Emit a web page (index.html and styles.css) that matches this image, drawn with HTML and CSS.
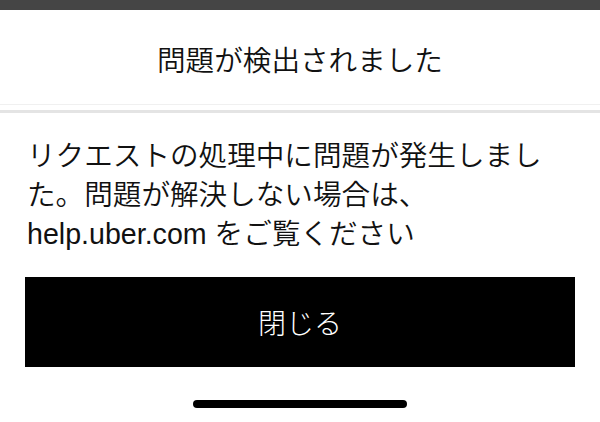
FILE: index.html
```html
<!DOCTYPE html>
<html lang="ja">
    <head>
        <title>問題が検出されました</title>
        <meta charset="UTF-8"/>
        <meta name="viewport" content="width=device-width" />
        <link rel="stylesheet" href="styles.css">
    </head>
    <body>
        <div id="page">
            <div class="barra"></div>
            <div class="cabecalho">
                <h1 class="titulo">問題が検出されました</h1>
            </div>
            <div class="separador"></div>
            <div id="conteudo">
                <p class="mensagem">リクエストの処理中に問題が発生しました。問題が解決しない場合は、help.uber.com をご覧ください</p>
                <button class="botao" type="button">閉じる</button>
            </div>
            <div class="rodape">
                <div class="indicador"></div>
            </div>
        </div>
    </body>
</html>
```

FILE: styles.css
```css
* {
    margin: 0px;
    padding: 0px;
    box-sizing: border-box;
}

body {
    background: #ffffff;
    font-family: "Liberation Sans", "Noto Sans CJK JP", sans-serif;
    color: #111111;
}

#page {
    width: 600px;
    height: 422px;
    display: flex;
    flex-direction: column;
}

.barra {
    height: 10px;
    background: #454545;
}

.cabecalho {
    height: 95px;
    padding-top: 7px;
    display: flex;
    align-items: center;
    justify-content: center;
    border-bottom: 1px solid #f0f0f0;
}

.titulo {
    font-size: 28.6px;
    font-weight: 350;
    line-height: 36px;
}

.separador {
    height: 3px;
    margin-top: 5px;
    background: #e4e4e4;
}

#conteudo {
    padding: 24px 25px 0px 25px;
}

.mensagem {
    font-size: 28.6px;
    font-weight: 350;
    line-height: 39px;
    padding-left: 2px;
}

.botao {
    display: block;
    width: 100%;
    height: 90px;
    margin-top: 23px;
    background: #000000;
    color: #ffffff;
    border: none;
    font-family: "Liberation Sans", "Noto Sans CJK JP", sans-serif;
    font-size: 28px;
    font-weight: 300;
}

.rodape {
    display: flex;
    justify-content: center;
    padding-top: 33px;
}

.indicador {
    width: 214px;
    height: 8px;
    border-radius: 4px;
    background: #000000;
}
```
